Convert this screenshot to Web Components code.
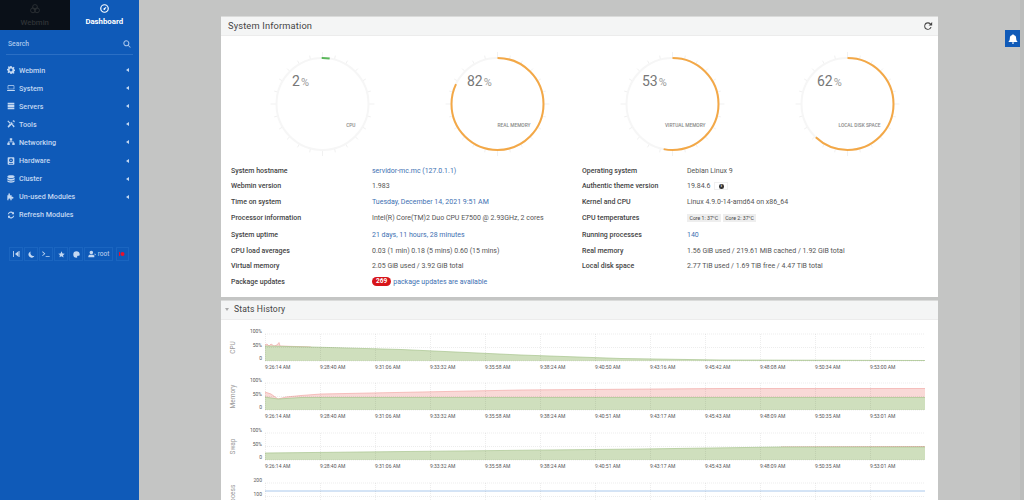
<!DOCTYPE html>
<html lang="en">
<head>
<meta charset="utf-8">
<title>Dashboard</title>
<style>
  html, body { margin: 0; height: 100%; overflow: hidden; }
  body { display: flex; font-family: Roboto, "Liberation Sans", sans-serif; background: #c4c5c4; }
</style>
</head>
<body>
<side-bar></side-bar>
<main-area>
  <info-panel title="System Information" size="9.3" reload>
    <div style="display:flex;padding:11px 3.5px 0 13.5px">
      <ring-gauge value="2" label="CPU"></ring-gauge>
      <ring-gauge value="82" label="REAL MEMORY"></ring-gauge>
      <ring-gauge value="53" label="VIRTUAL MEMORY"></ring-gauge>
      <ring-gauge value="62" label="LOCAL DISK SPACE"></ring-gauge>
    </div>
    <info-table></info-table>
  </info-panel>
  <info-panel title="Stats History" size="8.6" caret>
    <stat-chart kind="cpu" name="CPU" height="49"></stat-chart>
    <stat-chart kind="memory" name="Memory"></stat-chart>
    <stat-chart kind="swap" name="Swap"></stat-chart>
    <stat-chart kind="proc" name="Process"></stat-chart>
  </info-panel>
</main-area>
<notify-tab></notify-tab>
<script>
const icons = {
  gear: '<path fill-rule="evenodd" d="M5 0h2l.3 1.6 1.2.5L9.900 1.200l1.400 1.400-.9 1.400.5 1.200 1.600.3v2l-1.600.3-.5 1.200.9 1.400-1.400 1.400-1.400-.9-1.200.5L7 12H5l-.3-1.600-1.200-.5-1.400.9L.7 9.400l.9-1.400-.5-1.200L0 6.500v-2l1.600-.3.5-1.200-.9-1.400L2.600 .2 4 1.100l.7-.4zM6 3.800a2.200 2.200 0 1 0 0 4.400 2.200 2.200 0 0 0 0-4.400z"/>',
  laptop: '<path fill-rule="evenodd" d="M2 2h8a1 1 0 0 1 1 1v5H1V3a1 1 0 0 1 1-1zm0 1v4h8V3zM0 9h12v.500a1 1 0 0 1-1 1H1a1 1 0 0 1-1-1z"/>',
  server: '<path d="M1 1h10v2.700H1zM1 4.650h10v2.700H1zM1 8.300h10V11H1z"/>',
  tools: '<path d="M1.800 .6 6 4.800l-1.300 1.300L.5 1.900zM8.800 .5a2.700 2.700 0 0 1 2.700 3.300L9.900 2.300 8.500 3.600l1.600 1.600A2.700 2.700 0 0 1 6.800 2.500L.8 9.900l1.500 1.600 6.400-6.100zM7 7.200l1.300-1.300 3.300 3.500-1.600 1.700z"/>',
  sitemap: '<path d="M4.200 .5h3.600v3.200H6.500v1.600h3.700v2h1.300v3.200H7.900V7.300h1.300V6.300H2.800v1h1.300v3.200H.5V7.300h1.300v-2h3.700V3.700H4.200z"/>',
  hdd: '<path fill-rule="evenodd" d="M2 .5h8a1 1 0 0 1 1 1v9a1 1 0 0 1-1 1H2a1 1 0 0 1-1-1v-9a1 1 0 0 1 1-1zM6 2a3 3 0 1 0 0 6 3 3 0 0 0 0-6zm0 2a1 1 0 1 1 0 2 1 1 0 0 1 0-2zM3 9.500v1h6v-1z"/>',
  cluster: '<path d="M6 .5c3 0 5.500.8 5.500 2S9 4.500 6 4.500.5 3.700.5 2.500 3 .5 6 .5zM.5 4c1 1 3 1.500 5.500 1.500S10.500 5 11.500 4v2.500c0 1.200-2.500 2-5.500 2S.5 7.700.5 6.500zM.5 8c1 1 3 1.500 5.500 1.500S10.500 9 11.500 8v1.500c0 1.200-2.500 2-5.500 2s-5.500-.8-5.500-2z"/>',
  puzzle: '<path d="M3 .5a1.500 1.500 0 0 1 1.500 1.500c0 .5-.3.8-.3 1.200h2.800v2.800c.4 0 .7-.3 1.200-.3a1.500 1.500 0 0 1 0 3c-.5 0-.8-.3-1.200-.3v2.600H4.800c0-.4.300-.7.300-1.200a1.500 1.500 0 0 0-3 0c0 .5.300.8.300 1.200H.5V3.200h1.800c0-.4-.3-.7-.3-1.200A1.500 1.500 0 0 1 3 .5z"/>',
  refresh: '<path d="M10.500 1v3.800H6.700l1.400-1.400A3.300 3.300 0 0 0 2.800 5H1.100a5 5 0 0 1 8.200-2.800zM1.500 11V7.200h3.800L3.900 8.600A3.300 3.300 0 0 0 9.200 7h1.700a5 5 0 0 1-8.200 2.800z"/>',
  first: '<path d="M1.500 1.500h1.300v9H1.500zM9.500 2v8L4.500 6zM10 1.500h1.300v9H10z"/>',
  moon: '<path d="M5 .8a5.400 5.400 0 1 0 6.200 7.300A5 5 0 0 1 5 .8z"/>',
  term: '<path d="M1 2l4 3.500L1 9l-.8-.9 3-2.600-3-2.600zM5.500 9h6v1.300h-6z"/>',
  star: '<path d="M6 .5l1.700 3.600 3.900.5-2.900 2.700.8 3.900L6 8.800l-3.500 1.900.8-3.900L.4 4.600l3.900-.5z"/>',
  palette: '<path d="M6 .5a5.500 5.500 0 0 0 0 11c1.200 0 1.600-.8 1.200-1.600-.5-1 .1-1.900 1.200-1.900h1.300c1.100 0 1.800-.9 1.800-2.200C11.500 2.700 9 .5 6 .5z"/>',
  user: '<path d="M5 1a2.700 2.700 0 1 1 0 5.400A2.700 2.700 0 0 1 5 1zM.5 11V9.500C.5 8 1.800 7 3.200 7h3.600C8.200 7 9.500 8 9.500 9.500V11zM10 5l1.800 1.700L10 8.500z"/>',
  search: '<path fill-rule="evenodd" d="M5 .5a4.500 4.500 0 0 1 3.600 7.200l3 3-1 1-3-3A4.500 4.500 0 1 1 5 .5zm0 1.500a3 3 0 1 0 0 6 3 3 0 0 0 0-6z"/>',
  dash: '<path fill-rule="evenodd" d="M6 .2a5.800 5.800 0 1 1 0 11.600A5.800 5.800 0 0 1 6 .2zm0 1.600a4.200 4.200 0 1 0 0 8.400 4.200 4.200 0 0 0 0-8.400zM9 3.200 6.900 7.100a1.200 1.200 0 1 1-1.700-1.400z"/>',
  knot: '<g fill="none" stroke="currentColor" stroke-width="1"><circle cx="6" cy="3.600" r="2.900"/><circle cx="3.600" cy="7.600" r="2.900"/><circle cx="8.400" cy="7.600" r="2.900"/></g>',
  bell: '<path d="M6 .3c.5 0 .9.400.9.900 1.900.4 2.900 1.900 2.900 3.800 0 2.200.7 3 1.400 3.800v.900H.8v-.900C1.500 8 2.200 7.200 2.200 5c0-1.900 1-3.400 2.900-3.800 0-.5.400-.9.900-.9zM4.600 10.300h2.800a1.400 1.400 0 0 1-2.800 0z"/>',
  reload: '<path d="M6 1.500a4.500 4.500 0 1 0 4.300 5.800H9a3.300 3.300 0 1 1-.7-3.300L6.700 5.500h4.300V1.300L9.200 3A4.500 4.500 0 0 0 6 1.500z"/>'
};

const icon = (name, size) => `<svg width="${size}" height="${size}" viewBox="0 0 12 12" fill="currentColor" aria-hidden="true">${icons[name]}</svg>`;

class SideBar extends HTMLElement {
  constructor() {
    super();
    this.attachShadow({ mode: 'open' });
  }

  connectedCallback() {
    const menu = [
      ['gear', 'Webmin', true], ['laptop', 'System', true], ['server', 'Servers', true],
      ['tools', 'Tools', true], ['sitemap', 'Networking', true], ['hdd', 'Hardware', true],
      ['cluster', 'Cluster', true], ['puzzle', 'Un-used Modules', true], ['refresh', 'Refresh Modules', false]
    ];
    const rows = menu.map(([ic, name, arrow]) => `
      <div class="item">
        <span class="ic">${icon(ic, 8)}</span>
        <span class="name">${name}</span>
        ${arrow ? '<i class="arrow"></i>' : ''}
      </div>`).join('');

    this.shadowRoot.innerHTML = `
      <style>
        :host { display: block; flex: 0 0 139px; width: 139px; height: 500px; background: #0f5ab8; color: #c3d8f2; font: 500 7.200px Roboto, sans-serif; }
        .tabs { display: flex; height: 30px; }
        .tab { flex: 1; display: flex; flex-direction: column; align-items: center; padding-top: 4px; box-sizing: border-box; gap: 4px; font-weight: 700; font-size: 7.800px; }
        .tab.off { background: #0a1018; color: #2e3236; font-weight: 500; }
        .tab.on { color: #fff; }
        .search { display: flex; align-items: center; justify-content: space-between; height: 20px; margin: 4px 6px 0; padding: 0 2px; border-bottom: 1px solid #2b6fc4; font-size: 6.800px; color: #a9c6ec; }
        .search svg { display: block; }
        .menu { margin-top: 6px; }
        .item { display: flex; align-items: center; height: 18.100px; padding: 0 10px 0 7px; }
        .ic { width: 12px; display: flex; }
        .name { flex: 1; }
        .arrow { border: 2px solid transparent; border-right: 3px solid #c3d8f2; border-left: 0; }
        .btns { display: flex; gap: 1px; margin: 23.500px 0 0 9px; height: 14px; }
        .btn { display: flex; align-items: center; justify-content: center; gap: 2px; width: 14px; border: 1px solid #1a65c0; box-sizing: border-box; font-size: 6.500px; font-weight: 400; }
        .btn.wide { width: 29px; }
        .btn.out { color: #e8102c; width: 13px; margin-left: 2px; }
      </style>
      <div class="tabs">
        <div class="tab off">${icon('knot', 10)}<span>Webmin</span></div>
        <div class="tab on">${icon('dash', 9)}<span>Dashboard</span></div>
      </div>
      <div class="search"><span>Search</span>${icon('search', 8)}</div>
      <div class="menu">${rows}</div>
      <div class="btns">
        <div class="btn">${icon('first', 8)}</div>
        <div class="btn">${icon('moon', 7)}</div>
        <div class="btn">${icon('term', 8)}</div>
        <div class="btn">${icon('star', 7)}</div>
        <div class="btn">${icon('palette', 7)}</div>
        <div class="btn wide">${icon('user', 8)}<span>root</span></div>
        <div class="btn out"><svg width="7" height="6" viewBox="0 0 7 6" fill="currentColor"><rect x="0" y="1" width="1" height="4"/><circle cx="3.500" cy="3" r="2"/></svg></div>
      </div>
    `;
  }
}

class MainArea extends HTMLElement {
  constructor() {
    super();
    this.attachShadow({ mode: 'open' });
    this.shadowRoot.innerHTML = `
      <style>
        :host { display: block; flex: 1; height: 500px; overflow: hidden; box-sizing: border-box; padding: 16px 0 0 82px; border-right: 4px solid #bcbdbc; }
        .col { width: 717px; display: flex; flex-direction: column; gap: 3px; }
      </style>
      <div class="col"><slot></slot></div>
    `;
  }
}

class InfoPanel extends HTMLElement {
  constructor() {
    super();
    this.attachShadow({ mode: 'open' });
  }

  connectedCallback() {
    const title = this.getAttribute('title');
    const size = this.getAttribute('size');
    this.removeAttribute('title');
    this.shadowRoot.innerHTML = `
      <style>
        :host { display: block; background: #fff; border-top: 1px solid #dadbda; }
        header { display: flex; align-items: center; height: 19px; box-sizing: border-box; padding: 0 5px 1px 7px; background: #f4f5f5; border-bottom: 1px solid #ececec; color: #444; font: 400 ${size}px Roboto, sans-serif; letter-spacing: .15px; }
        header span { flex: 1; }
        .caret { border: 2.500px solid transparent; border-top: 3px solid #aaa; border-bottom: 0; margin: 1px 5px 0 -3px; }
        svg { display: block; color: #444; }
      </style>
      <header>
        ${this.hasAttribute('caret') ? '<i class="caret"></i>' : ''}
        <span>${title}</span>
        ${this.hasAttribute('reload') ? icon('reload', 10) : ''}
      </header>
      <slot></slot>
    `;
  }
}

class RingGauge extends HTMLElement {
  constructor() {
    super();
    this.attachShadow({ mode: 'open' });
  }

  connectedCallback() {
    const value = Number(this.getAttribute('value'));
    const label = this.getAttribute('label');
    const r = 46;
    const c = 2 * Math.PI * r;
    let ticks = '';
    for (let a = 0; a < 360; a += 15) {
      const outer = a % 90 === 0 ? 52 : 50;
      const s = Math.sin(a * Math.PI / 180), k = Math.cos(a * Math.PI / 180);
      ticks += `<line x1="${(r * s).toFixed(1)}" y1="${(-r * k).toFixed(1)}" x2="${(outer * s).toFixed(1)}" y2="${(-outer * k).toFixed(1)}"/>`;
    }
    const color = value < 50 ? '#5cb85c' : '#f3a847';
    const len = value < 5 ? 8 : c * value / 100;
    const rot = value < 5 ? -91 : -90;
    this.shadowRoot.innerHTML = `
      <style>
        :host { display: block; flex: 0 0 175px; height: 116px; }
        svg { display: block; }
        .num { font: 400 14px Roboto, sans-serif; fill: #777; }
        .pct { font: 400 11px Roboto, sans-serif; fill: #999; }
        .lab { font: 500 4.800px Roboto, sans-serif; fill: #888; }
      </style>
      <svg width="175" height="116" viewBox="-87.500 -57 175 116">
        <g stroke="#f1f1f1" stroke-width="1">${ticks}</g>
        <circle r="${r}" fill="none" stroke="#f6f6f6" stroke-width="2"/>
        <circle r="${r}" fill="none" stroke="${color}" stroke-width="2" stroke-dasharray="${len} ${c}" transform="rotate(${rot})"/>
        <text class="num" x="-30.500" y="-18">${value}<tspan class="pct" dx="1">%</tspan></text>
        <text class="lab" x="33" y="23" text-anchor="end">${label}</text>
      </svg>
    `;
  }
}

class InfoTable extends HTMLElement {
  constructor() {
    super();
    this.attachShadow({ mode: 'open' });
  }

  connectedCallback() {
    const left = [
      ['System hostname', '<a>servidor-mc.mc (127.0.1.1)</a>'],
      ['Webmin version', '1.983'],
      ['Time on system', '<a>Tuesday, December 14, 2021 9:51 AM</a>'],
      ['Processor information', 'Intel(R) Core(TM)2 Duo CPU E7500 @ 2.93GHz, 2 cores', 'tall'],
      ['System uptime', '<a>21 days, 11 hours, 28 minutes</a>'],
      ['CPU load averages', '0.03 (1 min) 0.18 (5 mins) 0.60 (15 mins)'],
      ['Virtual memory', '2.05 GiB used / 3.92 GiB total'],
      ['Package updates', '<b class="count">269</b><a>package updates are available</a>']
    ];
    const right = [
      ['Operating system', 'Debian Linux 9'],
      ['Authentic theme version', '19.84.6<span class="info"><i>i</i></span>'],
      ['Kernel and CPU', 'Linux 4.9.0-14-amd64 on x86_64'],
      ['CPU temperatures', '<span class="temp">Core 1: 37°C</span><span class="temp">Core 2: 37°C</span>', 'tall'],
      ['Running processes', '<a>140</a>'],
      ['Real memory', '1.56 GiB used / 219.61 MiB cached / 1.92 GiB total'],
      ['Local disk space', '2.77 TiB used / 1.69 TiB free / 4.47 TiB total'],
      ['', '']
    ];
    const col = (rows, cls) => `<div class="col ${cls}">${rows.map(([k, v, tall]) => `
      <div class="row ${tall || ''}"><span class="k">${k}</span><span class="v">${v}</span></div>`).join('')}</div>`;
    this.shadowRoot.innerHTML = `
      <style>
        :host { display: flex; padding: 0 0 7px 10px; font: 400 7px Roboto, sans-serif; color: #555; }
        .col { display: flex; flex-direction: column; }
        .l { width: 351px; }
        .row { display: flex; align-items: center; height: 15.600px; }
        .row.tall { height: 17.400px; padding-bottom: 1px; box-sizing: border-box; }
        .k { font-weight: 500; color: #444; }
        .l .k { flex: 0 0 141px; }
        .r .k { flex: 0 0 105px; }
        .v { display: flex; align-items: center; white-space: nowrap; }
        a { color: #3d70b2; }
        .count { display: inline-block; background: #d7141a; color: #fff; font: 700 6.500px/9px Roboto, sans-serif; padding: 0 4px; border-radius: 5px; margin-right: 2px; }
        .info { display: inline-flex; align-items: center; justify-content: center; width: 14px; height: 8px; margin-left: 4px; border: 1px solid #f0f0f0; box-sizing: border-box; }
        .info i { display: block; width: 4.500px; height: 4.500px; border-radius: 50%; background: #333; color: #fff; font: 700 4px/4.500px Roboto, sans-serif; text-align: center; }
        .temp { background: #eee; color: #444; font-size: 5.200px; line-height: 8.500px; padding: 0 2.500px; margin-right: 2px; }
      </style>
      ${col(left, 'l')}
      ${col(right, 'r')}
    `;
  }
}

class StatChart extends HTMLElement {
  constructor() {
    super();
    this.attachShadow({ mode: 'open' });
  }

  connectedCallback() {
    const kind = this.getAttribute('kind');
    const name = this.getAttribute('name');
    const h = this.getAttribute('height') || 50;
    // plot coordinates are relative to the chart box: x 44..704, y 8 (top) .. 35 (base)
    const data = {
      cpu: {
        redTop: 'M44 19L46 18L48 20L50 18L53 20L56 19L58 16.500L59 20L75 20.500L90 21',
        greenTop: 'M44 20L90 21L180 23.500L300 29L400 32.500L500 34L704 34.500',
        times: ['9:26:14', '9:28:40', '9:31:06', '9:33:32', '9:35:58', '9:38:24', '9:40:50', '9:43:16', '9:45:42', '9:48:08', '9:50:34', '9:53:00']
      },
      memory: {
        redTop: 'M44 17L50 19L57 24L65 22L80 20.500L100 19L300 15L500 13.500L704 13.500',
        greenTop: 'M44 22L50 23L57 24L65 23.500L80 22.500L704 22.500',
        times: null
      },
      swap: {
        redTop: 'M560 22L704 21.500',
        greenTop: 'M44 28L419 24L560 22L704 22',
        times: null
      },
      proc: { line: 'M44 16H704', times: null }
    }[kind];
    const later = ['9:26:14', '9:28:40', '9:31:06', '9:33:32', '9:35:58', '9:38:24', '9:40:51', '9:43:17', '9:45:43', '9:48:09', '9:50:35', '9:53:01'];
    const times = data.times || later;
    const ticks = kind === 'proc' ? ['200', '100', '0'] : ['100%', '50%', '0'];
    const area = (top, fill, line) => top ? `<path d="${top}V35H${top.slice(1).split('L')[0].split(' ')[0]}Z" fill="${fill}"/><path d="${top}" fill="none" stroke="${line}" stroke-width=".7"/>` : '';
    let grid = '';
    [8, 21.5, 35].forEach(y => { grid += `<line x1="44" x2="704" y1="${y}" y2="${y}"/>`; });
    times.forEach((t, i) => { grid += `<line x1="${44.5 + i * 55}" x2="${44.5 + i * 55}" y1="8" y2="35"/>`; });
    const labels = times.map((t, i) => `<text class="t" x="${44 + i * 55}" y="43">${t} AM</text>`).join('');
    const yticks = ticks.map((t, i) => `<text class="t" x="41" y="${7 + i * 13.5}" text-anchor="end">${t}</text>`).join('');
    this.shadowRoot.innerHTML = `
      <style>
        :host { display: block; height: ${h}px; overflow: visible; }
        :host(:first-of-type) { margin-top: 6px; }
        svg { display: block; overflow: visible; }
        .t { font: 400 5px Roboto, sans-serif; fill: #555; }
        .y { font: 400 6.500px Roboto, sans-serif; fill: #999; }
      </style>
      <svg width="717" height="${h}" viewBox="0 0 717 ${h}">
        <text class="y" text-anchor="middle" transform="translate(13.500 21.500) rotate(-90)">${name}</text>
        ${area(data.redTop, '#f9d9d7', '#f2aaa8')}
        ${area(data.greenTop, '#cfdfbd', '#a8c48e')}
        ${data.line ? `<path d="${data.line}" fill="none" stroke="#a9c8ec" stroke-width="1"/>` : ''}
        <g stroke="rgba(0,0,0,.07)" stroke-width="1" stroke-dasharray="1 1">${grid}</g>
        ${yticks}
        ${labels}
      </svg>
    `;
  }
}

class NotifyTab extends HTMLElement {
  constructor() {
    super();
    this.attachShadow({ mode: 'open' });
    this.shadowRoot.innerHTML = `
      <style>
        :host { position: absolute; top: 30px; left: 1005px; width: 15px; height: 17px; background: #0f5ab8; color: #fff; display: flex; align-items: center; justify-content: center; }
        svg { display: block; }
      </style>
      ${icon('bell', 10)}
    `;
  }
}

customElements.define('side-bar', SideBar);
customElements.define('main-area', MainArea);
customElements.define('info-panel', InfoPanel);
customElements.define('ring-gauge', RingGauge);
customElements.define('info-table', InfoTable);
customElements.define('stat-chart', StatChart);
customElements.define('notify-tab', NotifyTab);
</script>
</body>
</html>
